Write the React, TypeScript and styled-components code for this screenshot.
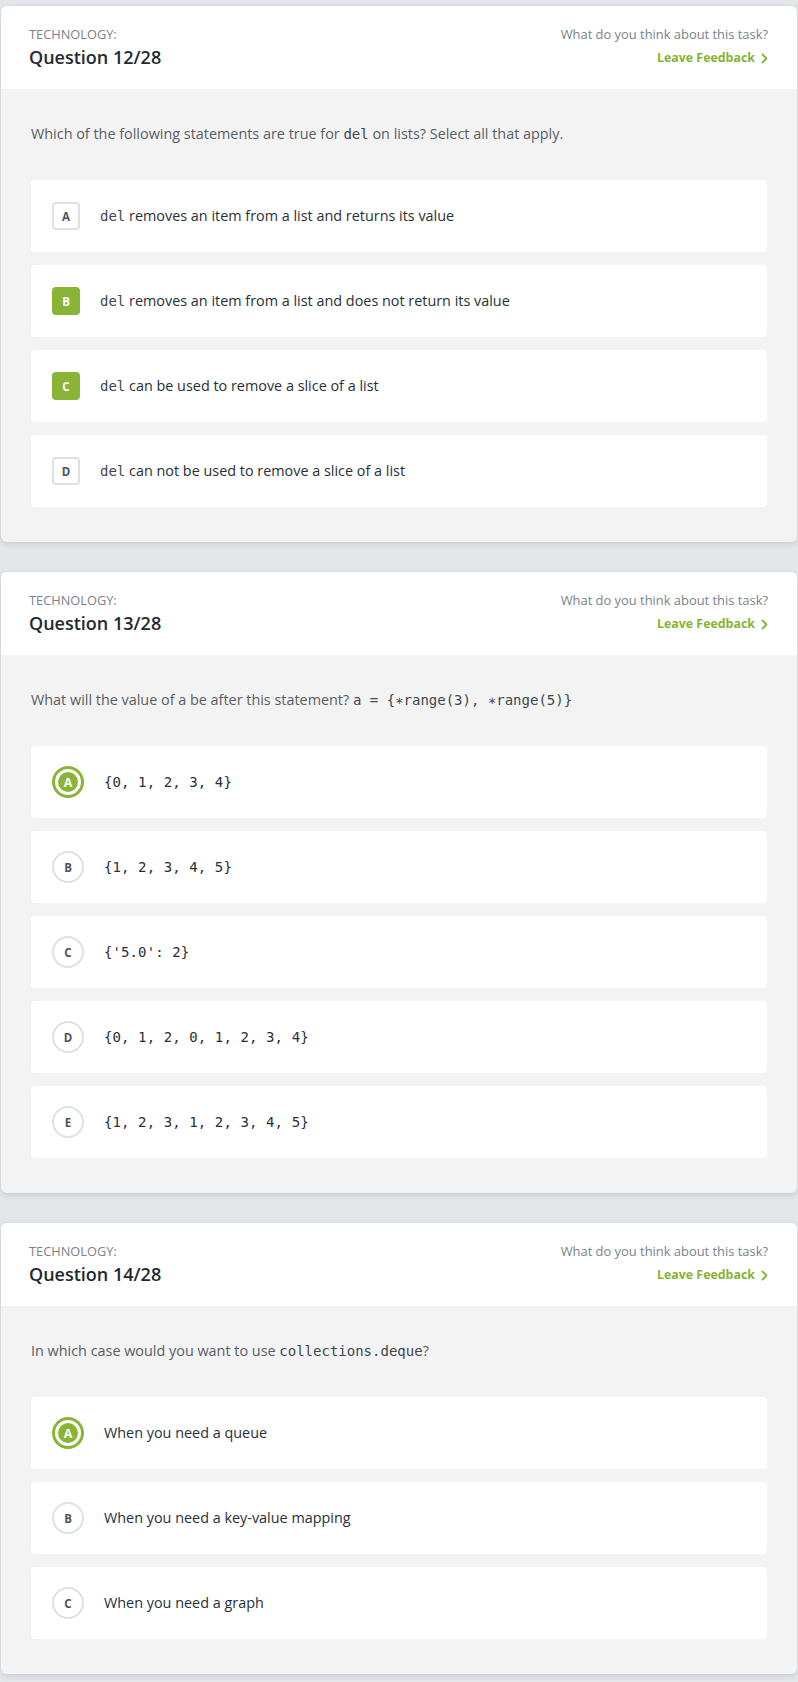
import React from "react";
import styled, { createGlobalStyle, css } from "styled-components";

const GlobalStyle = createGlobalStyle`
  html, body { margin: 0; padding: 0; background: #e4e7ea; }
  body { font-family: "Open Sans", "Noto Sans", sans-serif; -webkit-font-smoothing: antialiased; }
  * { box-sizing: border-box; }
`;

const Page = styled.div`
  display: flex;
  flex-direction: column;
  gap: 30px;
  padding: 6px 1px 8px;
`;

const Card = styled.section`
  background: #f3f3f3;
  border-radius: 6px;
  overflow: hidden;
  box-shadow: 0 2px 6px rgba(60, 70, 80, 0.18);
`;

const Header = styled.header`
  height: 83px;
  background: #ffffff;
  display: flex;
  justify-content: space-between;
  align-items: flex-start;
  padding: 19px 29px 0 28px;
`;

const HeaderLeft = styled.div`
  display: flex;
  flex-direction: column;
`;

const Category = styled.div`
  font-size: 12.8px;
  line-height: 18px;
  color: #7b828a;
  text-transform: uppercase;
`;

const Title = styled.h2`
  margin: 1px 0 0;
  font-size: 18px;
  line-height: 26px;
  font-weight: 600;
  color: #1e2a32;
`;

const HeaderRight = styled.div`
  display: flex;
  flex-direction: column;
  align-items: flex-end;
`;

const Ask = styled.div`
  font-size: 12.9px;
  line-height: 18px;
  color: #7b828a;
`;

const Feedback = styled.a`
  margin-top: 6px;
  display: inline-flex;
  align-items: center;
  gap: 6px;
  font-size: 12.4px;
  line-height: 18px;
  font-weight: 700;
  color: #86b334;
  text-decoration: none;
`;

const Body = styled.div`
  padding: 35px 30px 35px;
`;

const Prompt = styled.p`
  margin: 0 0 36px 0;
  font-size: 14.4px;
  line-height: 20px;
  color: #575e65;
`;

const Code = styled.code`
  font-family: "DejaVu Sans Mono", "Liberation Mono", monospace;
  font-size: 14px;
  color: #40474e;
`;

const Options = styled.div`
  display: flex;
  flex-direction: column;
  gap: 13px;
`;

const Option = styled.div`
  height: 72px;
  background: #ffffff;
  border-radius: 4px;
  display: flex;
  align-items: center;
  gap: 20px;
  padding-left: 21px;
`;

const markerBase = css`
  flex: none;
  display: flex;
  align-items: center;
  justify-content: center;
  font-size: 11.5px;
  font-weight: 700;
`;

const SquareMark = styled.span<{ $checked?: boolean }>`
  ${markerBase};
  width: 28px;
  height: 28px;
  border-radius: 4px;
  ${(p) =>
    p.$checked
      ? css`
          background: #8ab435;
          color: #ffffff;
        `
      : css`
          border: 2px solid #dde1e5;
          color: #4d545b;
        `}
`;

const RoundMark = styled.span<{ $checked?: boolean }>`
  ${markerBase};
  width: 32px;
  height: 32px;
  border-radius: 50%;
  ${(p) =>
    p.$checked
      ? css`
          border: 3px solid #8ab435;
          padding: 3px;
          background: #8ab435;
          background-clip: content-box;
          color: #ffffff;
          font-size: 12.5px;
        `
      : css`
          border: 2px solid #dde1e5;
          color: #4d545b;
        `}
`;

const OptionText = styled.span<{ $mono?: boolean }>`
  font-size: 14.4px;
  line-height: 20px;
  color: #283037;
  ${(p) =>
    p.$mono &&
    css`
      font-family: "DejaVu Sans Mono", "Liberation Mono", monospace;
      font-size: 14px;
      letter-spacing: 0.1px;
    `}
`;

const Chevron = () => (
  <svg width="7" height="11" viewBox="0 0 7 11" fill="none">
    <path d="M1.5 1.5 L5.5 5.5 L1.5 9.5" stroke="#86b334" strokeWidth="1.8" strokeLinecap="round" strokeLinejoin="round" />
  </svg>
);

type Opt = { letter: string; text: React.ReactNode; checked?: boolean };

type Q = {
  num: number;
  prompt: React.ReactNode;
  kind: "square" | "round";
  mono?: boolean;
  options: Opt[];
};

const questions: Q[] = [
  {
    num: 12,
    prompt: (
      <>
        Which of the following statements are true for <Code>del</Code> on lists? Select all that apply.
      </>
    ),
    kind: "square",
    options: [
      { letter: "A", text: <><Code>del</Code> removes an item from a list and returns its value</> },
      { letter: "B", text: <><Code>del</Code> removes an item from a list and does not return its value</>, checked: true },
      { letter: "C", text: <><Code>del</Code> can be used to remove a slice of a list</>, checked: true },
      { letter: "D", text: <><Code>del</Code> can not be used to remove a slice of a list</> },
    ],
  },
  {
    num: 13,
    prompt: (
      <>
        What will the value of a be after this statement? <Code>a = {"{∗range(3), ∗range(5)}"}</Code>
      </>
    ),
    kind: "round",
    mono: true,
    options: [
      { letter: "A", text: "{0, 1, 2, 3, 4}", checked: true },
      { letter: "B", text: "{1, 2, 3, 4, 5}" },
      { letter: "C", text: "{'5.0': 2}" },
      { letter: "D", text: "{0, 1, 2, 0, 1, 2, 3, 4}" },
      { letter: "E", text: "{1, 2, 3, 1, 2, 3, 4, 5}" },
    ],
  },
  {
    num: 14,
    prompt: (
      <>
        In which case would you want to use <Code>collections.deque</Code>?
      </>
    ),
    kind: "round",
    options: [
      { letter: "A", text: "When you need a queue", checked: true },
      { letter: "B", text: "When you need a key-value mapping" },
      { letter: "C", text: "When you need a graph" },
    ],
  },
];

export default function App() {
  return (
    <>
      <GlobalStyle />
      <Page>
        {questions.map((q) => (
          <Card key={q.num}>
            <Header>
              <HeaderLeft>
                <Category>Technology:</Category>
                <Title>Question {q.num}/28</Title>
              </HeaderLeft>
              <HeaderRight>
                <Ask>What do you think about this task?</Ask>
                <Feedback href="#">
                  Leave Feedback <Chevron />
                </Feedback>
              </HeaderRight>
            </Header>
            <Body>
              <Prompt>{q.prompt}</Prompt>
              <Options>
                {q.options.map((o) => (
                  <Option key={o.letter}>
                    {q.kind === "square" ? (
                      <SquareMark $checked={o.checked}>{o.letter}</SquareMark>
                    ) : (
                      <RoundMark $checked={o.checked}>{o.letter}</RoundMark>
                    )}
                    <OptionText $mono={q.mono}>{o.text}</OptionText>
                  </Option>
                ))}
              </Options>
            </Body>
          </Card>
        ))}
      </Page>
    </>
  );
}
